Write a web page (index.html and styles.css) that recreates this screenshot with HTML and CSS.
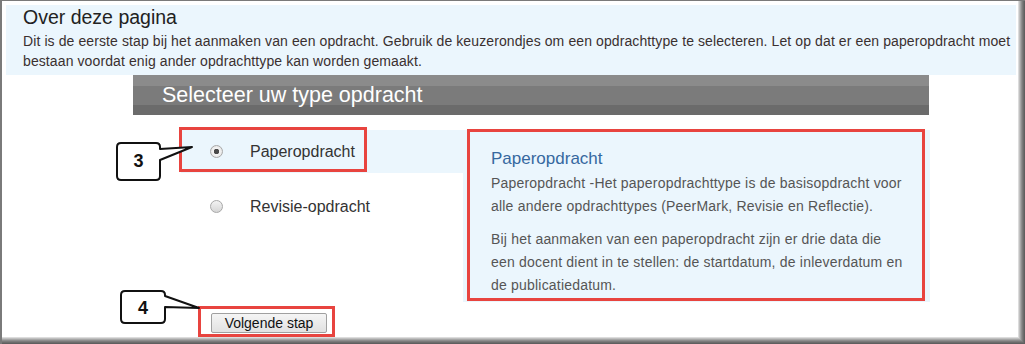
FILE: index.html
```html
<!DOCTYPE html>
<html lang="nl">
<head>
  <meta charset="UTF-8" />
  <meta name="viewport" content="width=device-width, initial-scale=1.0" />
  <title>Selecteer uw type opdracht</title>
  <link rel="stylesheet" href="styles.css">
</head>
<body>
  <div class="frame">
    <div class="about">
      <h1>Over deze pagina</h1>
      <p>Dit is de eerste stap bij het aanmaken van een opdracht. Gebruik de keuzerondjes om een opdrachttype te selecteren. Let op dat er een paperopdracht moet<br>bestaan voordat enig ander opdrachttype kan worden gemaakt.</p>
    </div>

    <div class="select-bar">Selecteer uw type opdracht</div>

    <div class="content">
      <div class="columns">
        <div class="options">
          <label class="option selected">
            <input type="radio" name="type" value="paper" checked />
            <span>Paperopdracht</span>
          </label>
          <label class="option">
            <input type="radio" name="type" value="revisie" />
            <span>Revisie-opdracht</span>
          </label>
        </div>
        <div class="panel">
          <h3>Paperopdracht</h3>
          <p>Paperopdracht -Het paperopdrachttype is de basisopdracht voor alle andere opdrachttypes (PeerMark, Revisie en Reflectie).</p>
          <p>Bij het aanmaken van een paperopdracht zijn er drie data die een docent dient in te stellen: de startdatum, de inleverdatum en de publicatiedatum.</p>
        </div>
      </div>
      <button type="button" class="next">Volgende stap</button>
    </div>

    <!-- annotations -->
    <div class="mark mark-option"></div>
    <div class="mark mark-panel"></div>
    <div class="mark mark-button"></div>

    <svg class="callout callout-3" width="80" height="40" viewBox="0 0 80 40">
      <path d="M5,1 H40 Q44,1 44,5 V7 L76,5 L44,18 V34 Q44,38 40,38 H5 Q1,38 1,34 V5 Q1,1 5,1 Z" />
      <text x="22.5" y="25">3</text>
    </svg>
    <svg class="callout callout-4" width="82" height="36" viewBox="0 0 82 36">
      <path d="M5,1 H41 Q45,1 45,5 V6 L79,18 L45,17 V29 Q45,33 41,33 H5 Q1,33 1,29 V5 Q1,1 5,1 Z" />
      <text x="23" y="24">4</text>
    </svg>
  </div>
</body>
</html>
```

FILE: styles.css
```css
body {
  margin: 0;
  font-family: "Liberation Sans", Arial, sans-serif;
  background: #fff;
}

.frame {
  position: relative;
  width: 1025px;
  height: 344px;
  box-sizing: border-box;
  padding: 5px 9px 0 6px;
  background: #fff;
  box-shadow:
    inset 2px 0 0 #7a7a7a,
    inset 0 1px 0 #7a7a7a,
    inset -1px -1px 0 #5f5f5f,
    inset -2px -2px 0 #6c6c6c,
    inset -3px -3px 0 #7b7b7b,
    inset -4px -4px 0 #8e8e8e,
    inset -5px -5px 0 #a6a6a6,
    inset -6px -6px 0 #c0c0c0,
    inset -7px -7px 0 #dcdcdc;
}

.about {
  background: #ebf6fd;
  padding: 1px 0 4px 17px;
  color: #3a3030;
}

.about h1 {
  margin: 0 0 3px;
  font-size: 19.5px;
  font-weight: normal;
  line-height: 22px;
  color: #222;
}

.about p {
  margin: 0;
  font-size: 14px;
  letter-spacing: 0.1px;
  line-height: 20px;
  white-space: nowrap;
}

.select-bar {
  margin-left: 127px;
  width: 796px;
  height: 40px;
  box-sizing: border-box;
  padding-left: 29px;
  font-size: 21.5px;
  line-height: 40px;
  color: #fff;
  background: linear-gradient(#8b8b8b 0, #8b8b8b 27%, #7b7b7b 27%, #7b7b7b 75%, #6b6b6b 75%, #6b6b6b 100%);
}

.content {
  margin: 15px 0 0 175px;
}

.columns {
  display: flex;
}

.options {
  width: 282px;
  display: flex;
  flex-direction: column;
  gap: 12px;
}

.option {
  display: flex;
  align-items: center;
  gap: 27px;
  height: 43px;
  padding-left: 29px;
  font-size: 16px;
  color: #333;
  cursor: pointer;
}

.option.selected {
  background: #ebf6fd;
}

.option input {
  appearance: none;
  -webkit-appearance: none;
  margin: 0;
  width: 13px;
  height: 13px;
  border-radius: 50%;
  border: 1px solid #a8a8a8;
  box-sizing: border-box;
  background: linear-gradient(#f2f2f2, #d6d6d6);
}

.option input:checked {
  background: radial-gradient(circle, #4a4a4a 0, #4a4a4a 2.5px, #f4f4f4 3px, #dcdcdc 100%);
}

.panel {
  width: 467px;
  height: 172px;
  box-sizing: border-box;
  padding: 19px 25px 5px 28px;
  background: #ebf6fd;
  color: #555;
}

.panel h3 {
  margin: 0 0 3px;
  font-size: 17px;
  font-weight: normal;
  line-height: 20px;
  color: #36689f;
}

.panel p {
  margin: 0 0 10px;
  font-size: 14px;
  letter-spacing: 0.2px;
  line-height: 23px;
}

.next {
  display: block;
  margin: 11px 0 0 30px;
  width: 116px;
  height: 20px;
  padding: 0;
  font-family: "Liberation Sans", Arial, sans-serif;
  font-size: 14px;
  color: #111;
  background: linear-gradient(#f5f5f5, #e1e1e1);
  border: 1px solid #a0a0a0;
  border-radius: 2px;
}

/* red annotation boxes */
.mark {
  position: absolute;
  box-sizing: border-box;
  border: 3px solid #e8443f;
}

.mark-option {
  left: 179px;
  top: 127px;
  width: 188px;
  height: 45px;
}

.mark-panel {
  left: 467px;
  top: 129px;
  width: 458px;
  height: 172px;
}

.mark-button {
  left: 198px;
  top: 306px;
  width: 137px;
  height: 31px;
}

/* numbered callouts */
.callout {
  position: absolute;
}

.callout path {
  fill: #fff;
  stroke: #111;
  stroke-width: 2;
  stroke-linejoin: round;
}

.callout text {
  font-family: "Liberation Sans", Arial, sans-serif;
  font-size: 18px;
  font-weight: bold;
  text-anchor: middle;
  fill: #111;
}

.callout-3 {
  left: 116px;
  top: 142px;
}

.callout-4 {
  left: 120px;
  top: 290px;
}
```
